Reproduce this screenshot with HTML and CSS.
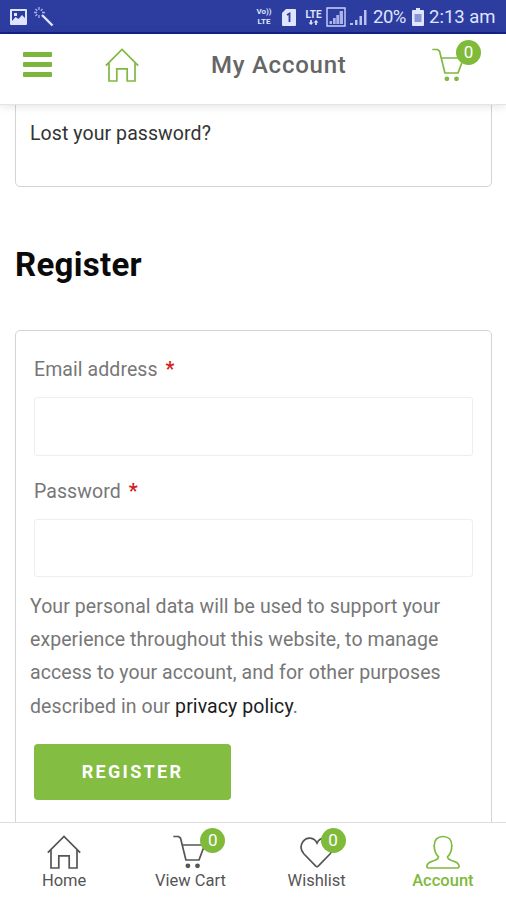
FILE: index.html
```html
<!DOCTYPE html>
<html lang="en">
<head>
<meta charset="utf-8">
<title>My Account</title>
<link rel="stylesheet" href="styles.css">
</head>
<body>
<svg class="defs" aria-hidden="true">
  <symbol id="home" viewBox="0 0 34 34"><path d="M.8 17.7 17 1.5l16.2 16.2M4 14.9V33h7.8V20.8h10.4V33H30V14.9"/></symbol>
  <symbol id="cart" viewBox="0 0 34 34"><path d="M.3 1.5h5.2l2 1.6L12.9 25H26l5.6-15H9.2"/><circle class="dot" cx="14.9" cy="30.8" r="2.4"/><circle class="dot" cx="24.5" cy="30.8" r="2.4"/></symbol>
  <symbol id="heart" viewBox="0 0 34 34"><path d="M17 8C14 2 6.500 1.500 3 6.500C0 11 .8 15.500 4 19L15.800 31.200Q17 32.300 18.200 31.200L30 19C33.200 15.500 34 11 31 6.500C27.500 1.500 20 2 17 8Z"/></symbol>
  <symbol id="user" viewBox="0 0 34 34"><path d="M17 1.500C11.500 1.500 8.200 5 8.200 10.500C8.200 15.500 9.800 19.300 12.500 21.800C12.500 24 10.500 25 7 26C2.500 27.300.9 28.500.9 31.500Q.9 33 2.500 33H31.500Q33.100 33 33.100 31.500C33.100 28.500 31.500 27.300 27 26C23.500 25 21.500 24 21.500 21.800C24.200 19.300 25.800 15.500 25.800 10.500C25.800 5 22.500 1.500 17 1.500Z"/></symbol>
</svg>
<div class="app">
  <div class="status">
    <svg class="st-picture" viewBox="0 0 17 16"><path fill="#dfe4ff" fill-rule="evenodd" d="M1 0h15q1 0 1 1v14q0 1-1 1H1q-1 0-1-1V1q0-1 1-1zM2 2v10l3.500-4 3 2 3.500-4 3 3V2zM4 4h3v3H4z"/></svg>
    <svg class="st-wand" viewBox="0 0 20 20"><path d="m8 8 10.500 10.500" stroke="#dfe4ff" stroke-width="2.400"/><path d="M5 0v3M5 8v3M0 5.500h3M8 5.500h3M1.500 2l1.800 1.800M8.500 2 6.800 3.800M1.500 9l1.800-1.800" stroke="#a9b2ee" stroke-width="1.300"/></svg>
    <span class="volte"><span>Vo))</span><span>LTE</span></span>
    <svg class="st-sim" viewBox="0 0 14 17"><path fill="#dfe4ff" d="M4 0h9q1 0 1 1v15q0 1-1 1H1q-1 0-1-1V4z"/><path d="M5 6 7.500 4.500V13" fill="none" stroke="#2d3c9f" stroke-width="1.800"/></svg>
    <span class="lte"><span>LTE</span><svg viewBox="0 0 12 6"><path fill="#dfe4ff" d="M2 0h2v3h2L3 6 0 3h2zM8 6h2V3h2L9 0 6 3h2z"/></svg></span>
    <svg class="st-box" viewBox="0 0 20 20"><path d="M1 1h18v18H1z" fill="none" stroke="#cbd2fa" stroke-width="1.400"/><path d="M3.500 17v-3H6v3zM7 17v-6h2.700v6zM10.300 17V8H13v9zM13.600 17V4H17v13z" fill="#aab3e8"/></svg>
    <svg class="st-bars" viewBox="0 0 17 17"><path fill="#b8c1f2" d="M0 14h3v2H0zM5 11h2.500v5H5zM9.500 7H12v9H9.500zM14 1h2.500v15H14z"/></svg>
    <span class="percent">20%</span>
    <svg class="st-battery" viewBox="0 0 12 18"><path fill="#dfe4ff" d="M4 0h4v2h3q1 0 1 1v14q0 1-1 1H1q-1 0-1-1V3q0-1 1-1h3z"/><path fill="#8a95d6" d="M2.500 6h7v8h-7z"/></svg>
    <span class="clock">2:13 am</span>
  </div>
  <header class="header">
    <div class="burger"><i></i><i></i><i></i></div>
    <svg class="icon head-home"><use href="#home"/></svg>
    <h1>My Account</h1>
    <div class="with-badge"><svg class="icon"><use href="#cart"/></svg><b class="badge">0</b></div>
  </header>
  <main class="content">
    <section class="card login"><a href="#">Lost your password?</a></section>
    <h2>Register</h2>
    <form class="card register">
      <label for="email">Email address <em>*</em></label>
      <input id="email" type="email">
      <label for="password">Password <em>*</em></label>
      <input id="password" type="password">
      <p>Your personal data will be used to support your<br>experience throughout this website, to manage<br>access to your account, and for other purposes<br>described in our <a href="#">privacy policy</a>.</p>
      <button type="button">REGISTER</button>
    </form>
  </main>
  <nav class="tabs">
    <a><span class="with-badge"><svg class="icon"><use href="#home"/></svg></span><span>Home</span></a>
    <a><span class="with-badge"><svg class="icon"><use href="#cart"/></svg><b class="badge">0</b></span><span>View Cart</span></a>
    <a><span class="with-badge wish"><svg class="icon"><use href="#heart"/></svg><b class="badge">0</b></span><span>Wishlist</span></a>
    <a class="active"><span class="with-badge"><svg class="icon"><use href="#user"/></svg></span><span>Account</span></a>
  </nav>
</div>
</body>
</html>
```
FILE: styles.css
```css
* { box-sizing: border-box; }
body { margin: 0; background: #fff; font-family: Roboto, "Liberation Sans", sans-serif; }
a { text-decoration: none; color: inherit; }
.defs { position: absolute; width: 0; height: 0; }
.app { width: 506px; height: 900px; display: flex; flex-direction: column; overflow: hidden; }

.status { height: 34px; flex: none; display: flex; align-items: center; padding: 2px 0 0 10px; background: #2d3c9f; border-bottom: 2px solid #15208c; color: #dfe4ff; white-space: nowrap; }
.status svg { flex: none; }
.st-picture { width: 17px; height: 16px; }
.st-wand { width: 20px; height: 20px; margin-left: 7px; }
.volte { width: 18px; margin-left: 201px; font-size: 8px; line-height: 10px; font-weight: 700; display: flex; flex-direction: column; align-items: center; }
.st-sim { width: 14px; height: 17px; margin-left: 9px; }
.lte { width: 19px; margin-left: 8px; font-size: 10px; line-height: 9px; font-weight: 700; display: flex; flex-direction: column; align-items: center; gap: 1px; }
.lte svg { width: 11px; height: 5px; }
.st-box { width: 20px; height: 20px; margin-left: 3px; }
.st-bars { width: 17px; height: 17px; margin-left: 4px; }
.percent { width: 33px; margin-left: 6px; font-size: 18.500px; letter-spacing: -.5px; }
.st-battery { width: 12px; height: 18px; margin-left: 6px; }
.clock { margin-left: 5px; font-size: 18.500px; }

.header { position: relative; z-index: 1; height: 71px; flex: none; display: flex; align-items: flex-start; padding: 14px 0 0 23px; background: #fff; border-bottom: 1px solid #e4e4e4; box-shadow: 0 1px 9px rgba(0, 0, 0, .12); color: #80b840; }
.burger { width: 29px; margin-top: 4px; display: grid; gap: 5px; }
.burger i { height: 5px; background: #7cb63a; border-radius: 1px; }
.icon { display: block; width: 34px; height: 34px; fill: none; stroke: currentColor; stroke-width: 1.700; overflow: visible; }
.dot { fill: currentColor; stroke: none; }
.head-home { margin-left: 53px; }
h1 { width: 136px; margin: 3px 0 0 72px; font-size: 24px; line-height: 28px; font-weight: 500; letter-spacing: .750px; color: #666; white-space: nowrap; }
.header .with-badge { margin-left: 85px; }
.with-badge { position: relative; display: block; width: 34px; height: 34px; }
.badge { position: absolute; left: 27px; top: -7px; width: 25px; height: 25px; border-radius: 50%; background: #80ba3a; color: #fff; font-size: 17px; line-height: 25px; font-weight: 400; text-align: center; }
.header .badge { left: 24px; top: -8px; }
.wish .badge { left: 21px; }

.content { flex: 1; min-height: 0; overflow: hidden; padding: 0 14px 0 15px; }
.card { border: 1.500px solid #d4d4d4; border-radius: 5px; padding: 0 18px 0 18px; font-size: 19.500px; letter-spacing: .080px; color: #777; }
.login { height: 89px; margin-top: -7px; padding: 21px 14px; line-height: 28px; color: #333; }
h2 { margin: 58px 0 45px; font-size: 33px; line-height: 40px; font-weight: 700; letter-spacing: .300px; color: #0a0a0a; }
.register { height: 560px; padding-top: 22px; }
label { display: block; line-height: 33px; }
label em { color: #d21c1c; font-style: normal; font-weight: 700; margin-left: 3px; }
input { display: block; width: 439px; height: 59px; margin: 11px 0 19px; border: 1px solid #eee; border-radius: 3px; background: #fff; }
#password { height: 58px; margin-bottom: 13px; }
p { margin: 0 0 0 -4px; line-height: 33.200px; white-space: nowrap; }
p a { color: #1c1c1c; }
button { display: block; width: 197px; height: 56px; margin-top: 21px; border: 0; border-radius: 4px; background: #83bd41; color: #fff; font: 700 18px Roboto, sans-serif; letter-spacing: 2.300px; }

.tabs { height: 78px; flex: none; display: grid; grid-template-columns: repeat(4, 1fr); border-top: 1px solid #dedede; background: #fff; position: relative; color: #555; padding-left: 1px; }
.tabs a { display: flex; flex-direction: column; align-items: center; padding-top: 12px; font-size: 16.500px; line-height: 23px; }
.tabs .active { color: #7fb93c; font-weight: 500; }
```
